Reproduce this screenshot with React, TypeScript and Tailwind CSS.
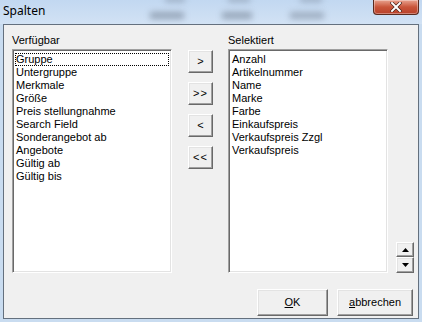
import React from "react";

const left = [
  "Gruppe",
  "Untergruppe",
  "Merkmale",
  "Größe",
  "Preis stellungnahme",
  "Search Field",
  "Sonderangebot ab",
  "Angebote",
  "Gültig ab",
  "Gültig bis",
];

const right = [
  "Anzahl",
  "Artikelnummer",
  "Name",
  "Marke",
  "Farbe",
  "Einkaufspreis",
  "Verkaufspreis Zzgl",
  "Verkaufspreis",
];

const btn =
  "flex items-center justify-center bg-[#f0f0f0] border border-t-white border-l-white border-r-[#696969] border-b-[#696969] shadow-[inset_-1px_-1px_0_#a0a0a0,inset_1px_1px_0_#e3e3e3]";

function ListBox({ items, focus }: { items: string[]; focus?: boolean }) {
  return (
    <div className="w-[160px] h-[224px] bg-white border border-t-[#a0a0a0] border-l-[#a0a0a0] border-r-white border-b-white shadow-[inset_1px_1px_0_#696969,inset_-1px_-1px_0_#e3e3e3] pt-[3px] px-[2px]">
      {items.map((t, i) => (
        <div
          key={t}
          className={
            "h-[13px] leading-[13px] pl-[1px] " +
            (focus && i === 0 ? "outline outline-1 outline-dotted outline-black -outline-offset-1" : "")
          }
        >
          {t}
        </div>
      ))}
    </div>
  );
}

export default function App() {
  return (
    <div
      className="relative w-[422px] h-[322px] overflow-hidden bg-[#c9dcf0] text-[11px] text-black"
      style={{ fontFamily: '"Liberation Sans", Arial, sans-serif' }}
    >
      {/* blurred window behind the glass title */}
      <div className="absolute inset-x-0 top-0 h-[24px] bg-gradient-to-b from-[#c2d8f1] to-[#d2e2f4]" />
      <div className="absolute left-[150px] top-[12px] w-[34px] h-[7px] bg-[#7e8c9f] blur-[3px] opacity-70" />
      <div className="absolute left-[222px] top-[12px] w-[30px] h-[7px] bg-[#7e8c9f] blur-[3px] opacity-70" />
      <div className="absolute left-[290px] top-[12px] w-[34px] h-[7px] bg-[#7e8c9f] blur-[3px] opacity-60" />
      <div className="absolute left-[165px] top-[-3px] w-[20px] h-[5px] bg-[#7e8c9f] blur-[3px] opacity-60" />
      <div className="absolute left-[228px] top-[-3px] w-[22px] h-[5px] bg-[#7e8c9f] blur-[3px] opacity-60" />
      <div className="absolute left-[300px] top-[-3px] w-[22px] h-[5px] bg-[#7e8c9f] blur-[3px] opacity-60" />

      <div className="relative flex flex-col h-full">
        {/* title bar */}
        <div
          className="h-[24px] flex items-center pl-[3px] pb-[2px] text-[12px]"
          style={{ fontFamily: '"Noto Sans", "Liberation Sans", sans-serif' }}
        >
          Spalten
        </div>

        {/* close button */}
        <div className="absolute right-[3px] top-0 w-[46px] h-[15px] rounded-b-[4px] border border-t-0 border-[#5a2a1e] bg-gradient-to-b from-[#e8a28f] via-[#c9553a] to-[#b8402a] flex items-center justify-center shadow-[inset_0_0_0_1px_rgba(255,255,255,0.35)]">
          <svg width="12" height="10" viewBox="0 0 12 10">
            <path d="M2 1 L10 9 M10 1 L2 9" stroke="#3a1a12" strokeWidth="3.2" strokeLinecap="square" />
            <path d="M2 1 L10 9 M10 1 L2 9" stroke="#ffffff" strokeWidth="2" strokeLinecap="square" />
          </svg>
        </div>

        {/* client area */}
        <div className="mx-[3px] h-[295px] border border-[#64707e] bg-[#f0f0f0] flex flex-col pl-[8px] pr-[5px] pt-[9px]">
          <div className="flex items-start">
            <div className="flex flex-col">
              <div className="h-[13px] leading-[13px] mb-[2px]">Verfügbar</div>
              <ListBox items={left} focus />
            </div>
            <div className="flex flex-col gap-[9px] ml-[16px] mt-[16px]">
              <div className={btn + " w-[25px] h-[23px]"}>&gt;</div>
              <div className={btn + " w-[25px] h-[23px] tracking-[1px]"}>&gt;&gt;</div>
              <div className={btn + " w-[25px] h-[23px]"}>&lt;</div>
              <div className={btn + " w-[25px] h-[23px] tracking-[1px]"}>&lt;&lt;</div>
            </div>
            <div className="flex flex-col ml-[15px]">
              <div className="h-[13px] leading-[13px] mb-[2px]">Selektiert</div>
              <ListBox items={right} />
            </div>
            <div className="flex flex-col ml-[8px] self-stretch justify-end">
              <div className={btn + " w-[18px] h-[15px]"}>
                <svg width="7" height="4" viewBox="0 0 7 4">
                  <path d="M0 4 L3.5 0 L7 4 Z" fill="#000" />
                </svg>
              </div>
              <div className={btn + " w-[18px] h-[16px]"}>
                <svg width="7" height="4" viewBox="0 0 7 4">
                  <path d="M0 0 L7 0 L3.5 4 Z" fill="#000" />
                </svg>
              </div>
            </div>
          </div>

          <div className="flex justify-end gap-[9px] mt-[16px]">
            <div className={btn + " w-[71px] h-[27px]"}>
              <span>
                <span className="underline">O</span>K
              </span>
            </div>
            <div className={btn + " w-[76px] h-[27px]"}>
              <span>
                <span className="underline">a</span>bbrechen
              </span>
            </div>
          </div>
        </div>
      </div>
    </div>
  );
}
